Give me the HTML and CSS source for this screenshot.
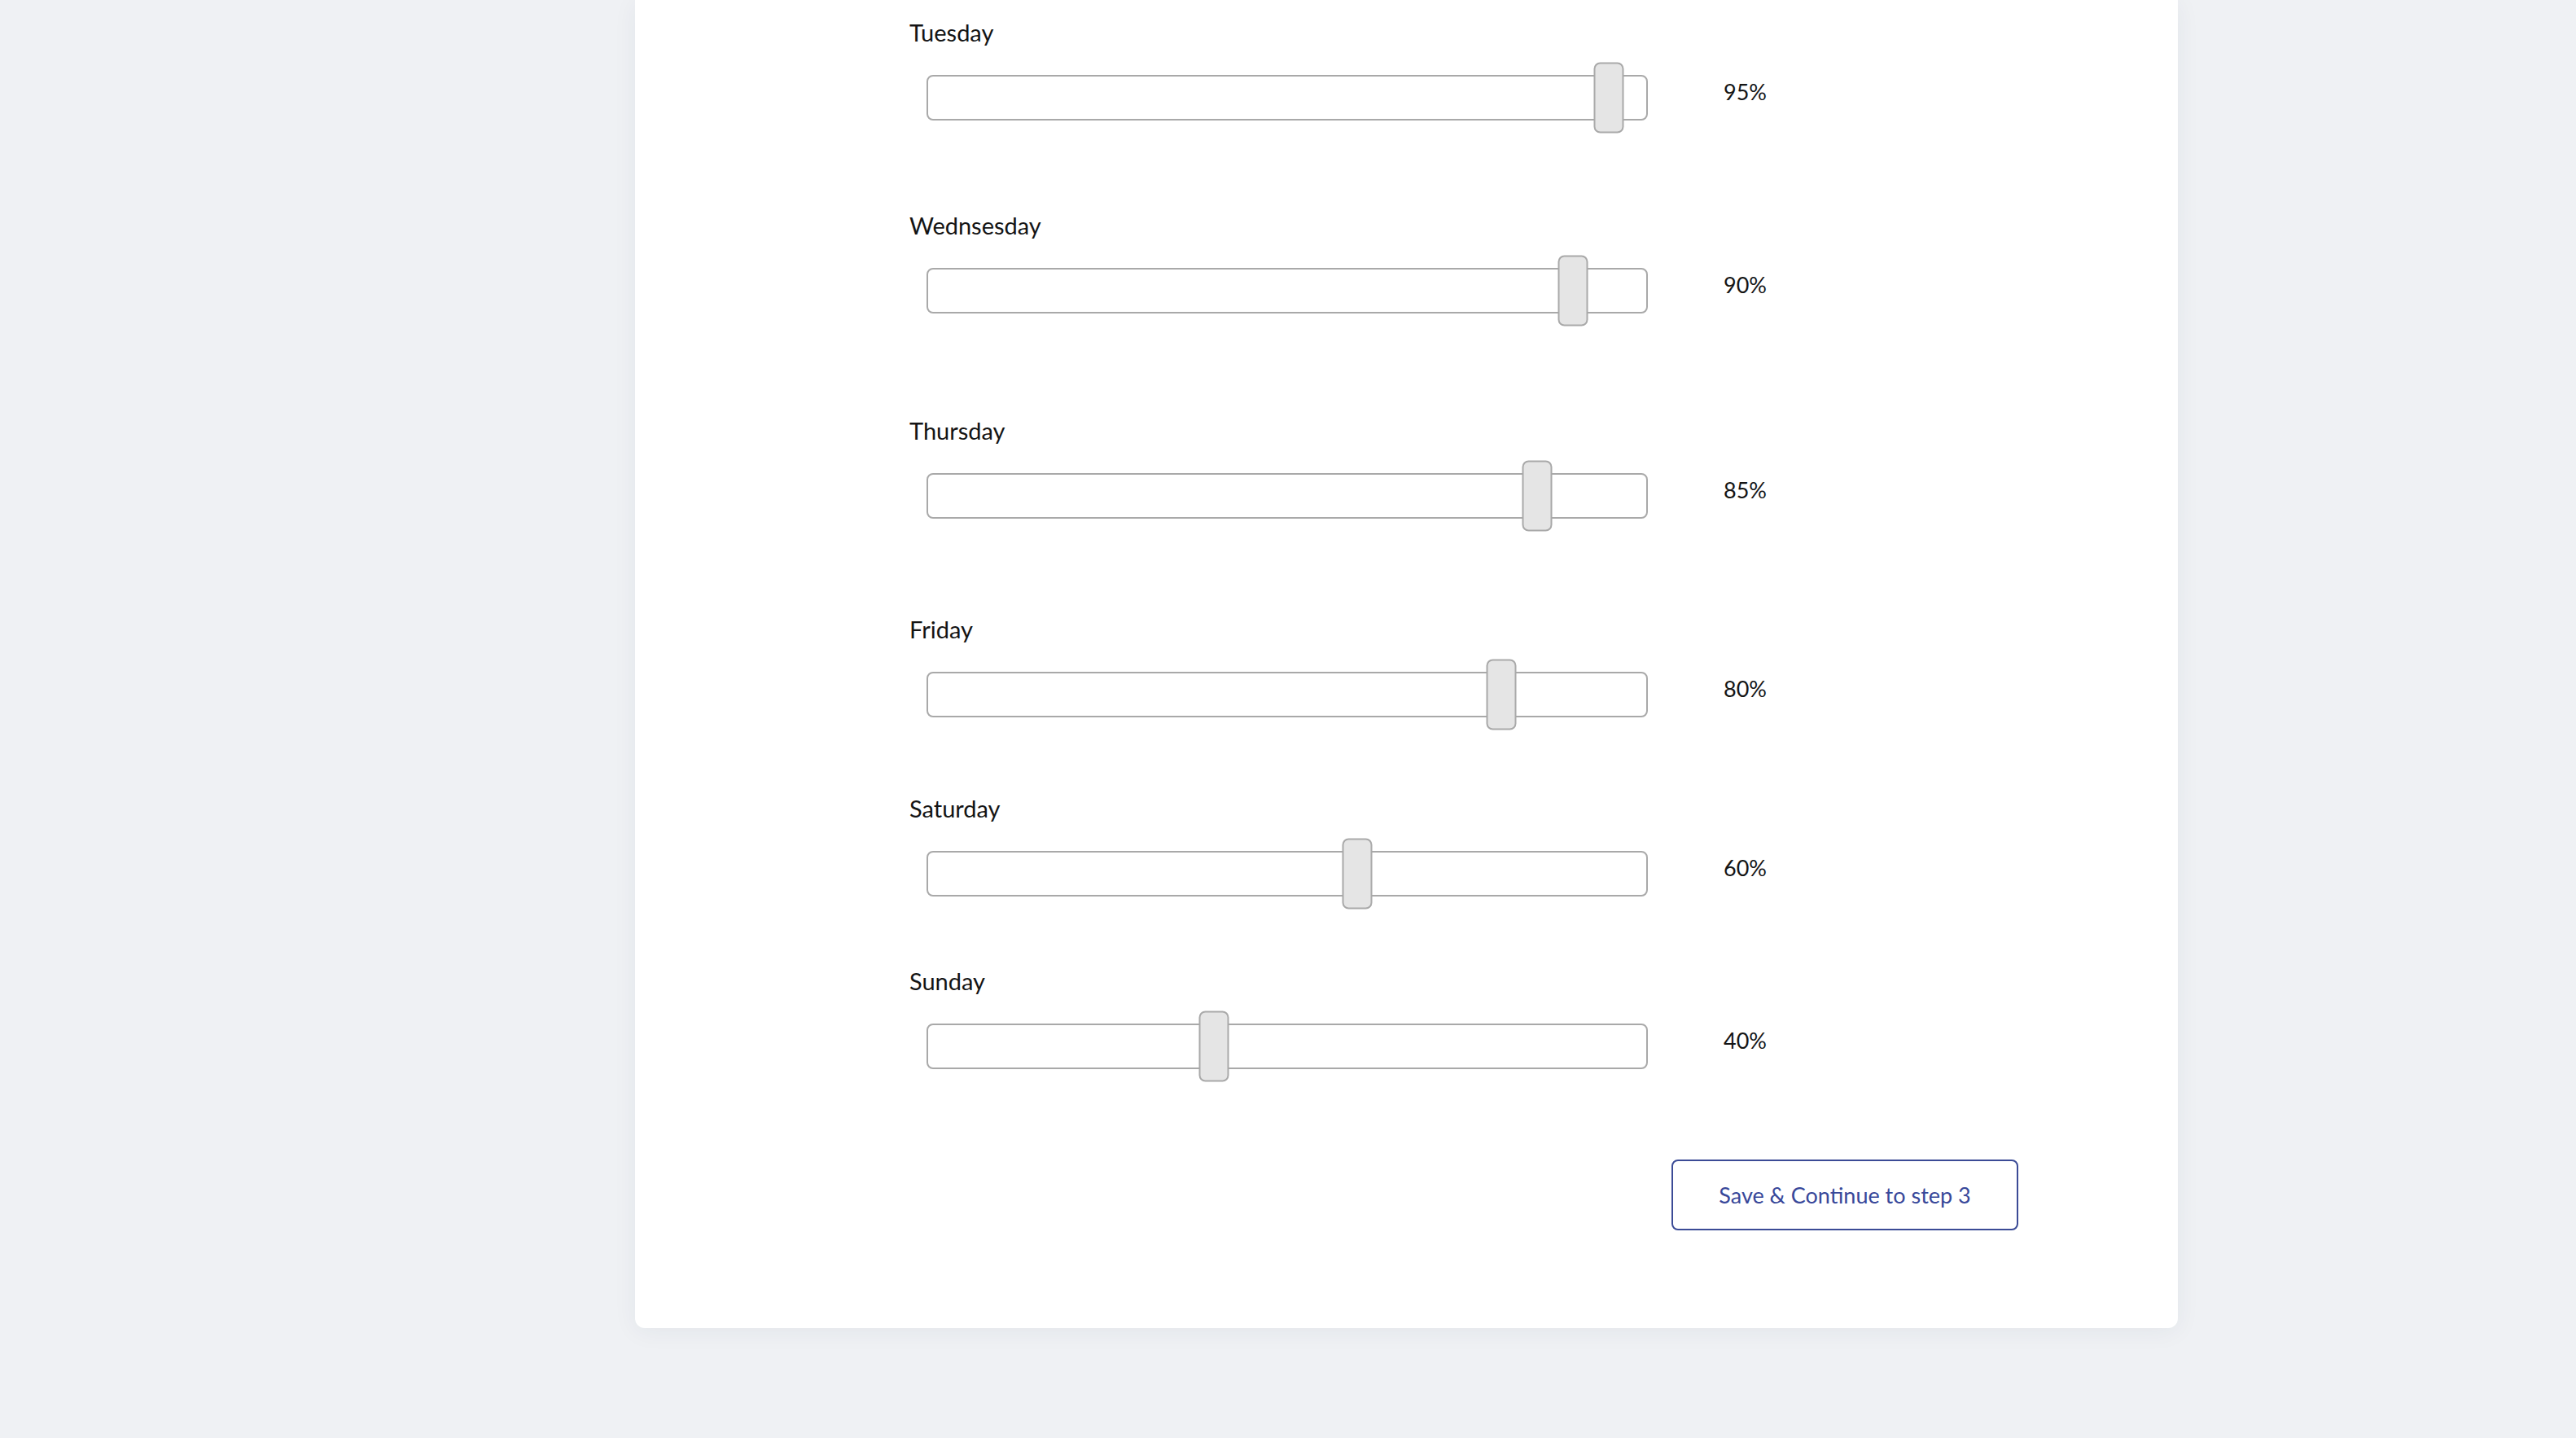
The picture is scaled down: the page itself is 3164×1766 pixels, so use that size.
FILE: index.html
```html
<!DOCTYPE html>
<html lang="en">
<head>
  <meta charset="UTF-8" />
  <meta name="viewport" content="width=device-width, initial-scale=1.0"/>
  <title>Weekly Availability - Step 2</title>
  <link rel="stylesheet" href="styles.css">
</head>
<body>
  <div class="page">
    <aside class="side"></aside>

    <main class="card">
      <form class="schedule" onsubmit="return false">

        <div class="day">
          <label>Tuesday</label>
          <div class="slider-row">
            <div class="track"><span class="thumb" style="left: 95%"></span></div>
            <span class="pct">95%</span>
          </div>
        </div>

        <div class="day">
          <label>Wednsesday</label>
          <div class="slider-row">
            <div class="track"><span class="thumb" style="left: 90%"></span></div>
            <span class="pct">90%</span>
          </div>
        </div>

        <div class="day">
          <label>Thursday</label>
          <div class="slider-row">
            <div class="track"><span class="thumb" style="left: 85%"></span></div>
            <span class="pct">85%</span>
          </div>
        </div>

        <div class="day">
          <label>Friday</label>
          <div class="slider-row">
            <div class="track"><span class="thumb" style="left: 80%"></span></div>
            <span class="pct">80%</span>
          </div>
        </div>

        <div class="day">
          <label>Saturday</label>
          <div class="slider-row">
            <div class="track"><span class="thumb" style="left: 60%"></span></div>
            <span class="pct">60%</span>
          </div>
        </div>

        <div class="day">
          <label>Sunday</label>
          <div class="slider-row">
            <div class="track"><span class="thumb" style="left: 40%"></span></div>
            <span class="pct">40%</span>
          </div>
        </div>

        <div class="actions">
          <button class="button" type="submit">Save &amp; Continue to step 3</button>
        </div>

      </form>
    </main>
  </div>
</body>
</html>
```

FILE: styles.css
```css
* {
  box-sizing: border-box;
}

body {
  margin: 0;
  font-family: Lato, "Open Sans", Arial, sans-serif;
  background: #eff1f4;
  color: #141414;
}

.page {
  display: grid;
  grid-template-columns: 780px 1895px;
  min-height: 100vh;
  align-items: start;
}

.card {
  background-color: #fff;
  border-radius: 0 0 12px 12px;
  box-shadow: 0 4px 30px rgba(30, 50, 90, 0.06);
  padding: 23px 196px 120px 337px;
}

.schedule {
  display: flex;
  flex-direction: column;
}

.day label {
  display: block;
  font-size: 29px;
  line-height: 34px;
}

/* spacing between the day groups */
.day:nth-child(2) { margin-top: 112px; }
.day:nth-child(3) { margin-top: 127px; }
.day:nth-child(4) { margin-top: 119px; }
.day:nth-child(5) { margin-top: 95px; }
.day:nth-child(6) { margin-top: 87px; }

.slider-row {
  display: flex;
  align-items: flex-start;
  margin-top: 35px;
  padding-left: 21px;
}

.track {
  position: relative;
  width: 886px;
  height: 56px;
  border: 2px solid #a9a9a9;
  border-radius: 8px;
  background: #fff;
}

.thumb {
  position: absolute;
  top: 50%;
  width: 37px;
  height: 87px;
  margin-left: -2px;
  transform: translate(-50%, -50%);
  background: #e5e5e5;
  border: 2px solid #a9a9a9;
  border-radius: 8px;
}

.pct {
  margin-left: 93px;
  margin-top: 5px;
  font-size: 27px;
  line-height: 32px;
}

.actions {
  display: flex;
  justify-content: flex-end;
  margin-top: 111px;
}

.button {
  width: 426px;
  height: 87px;
  font-family: inherit;
  font-size: 27px;
  color: #38489a;
  background: #fff;
  border: 2px solid #3b4b96;
  border-radius: 8px;
  cursor: pointer;
}
```
